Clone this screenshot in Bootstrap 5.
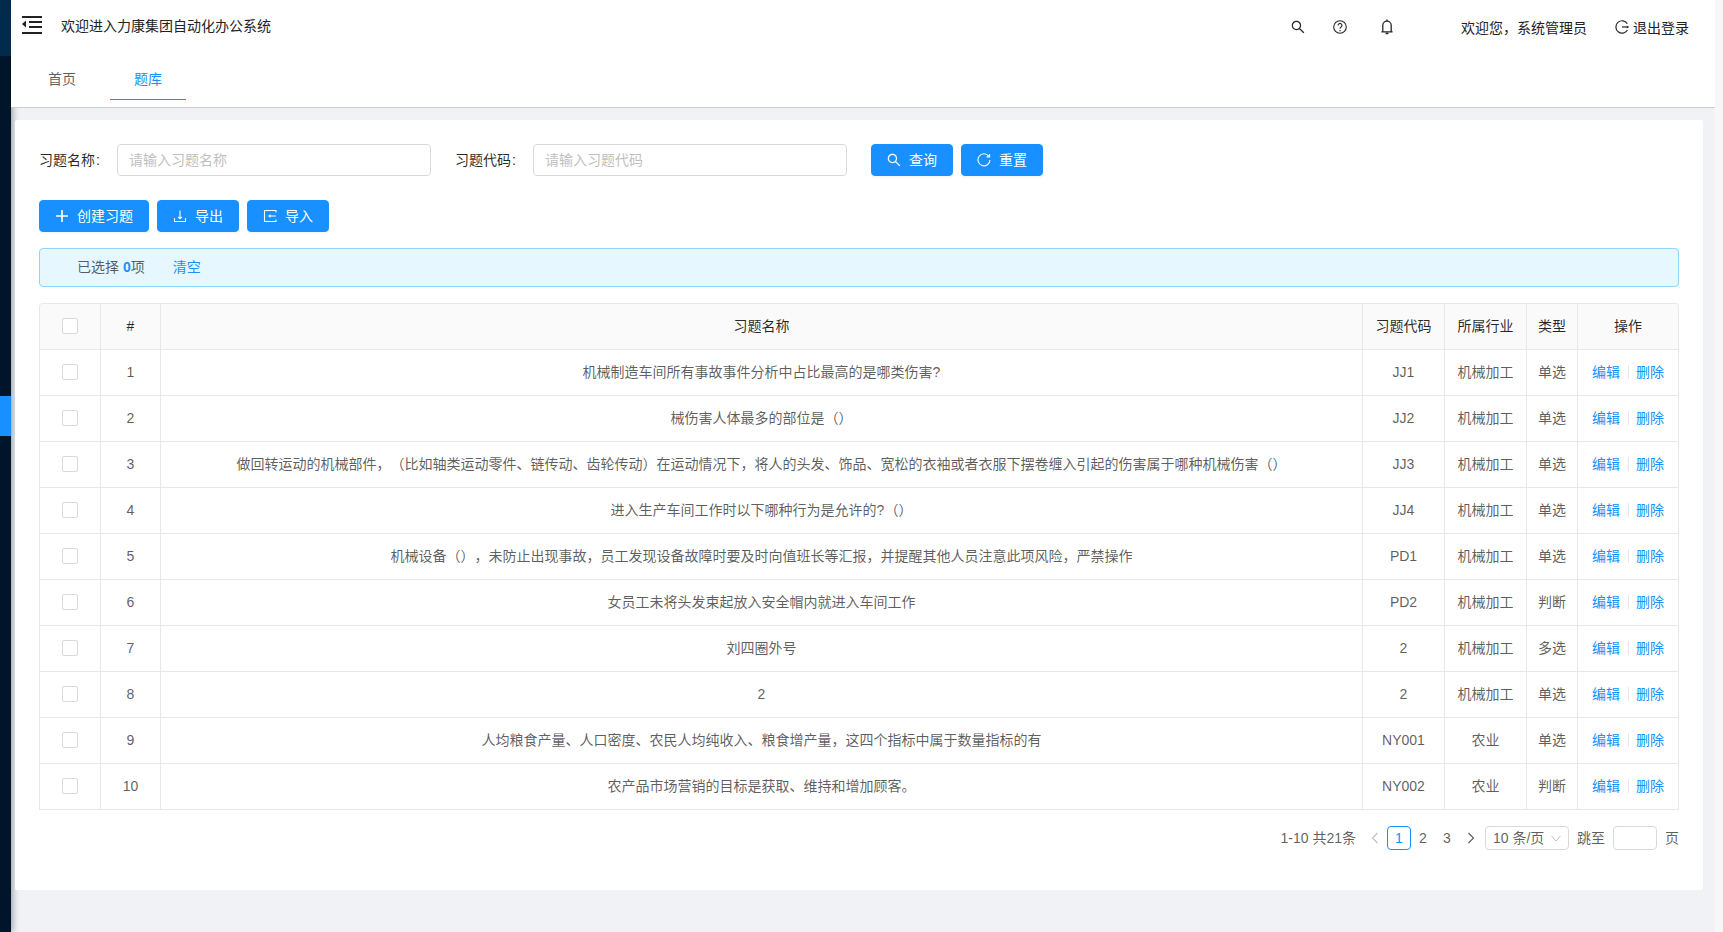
<!DOCTYPE html>
<html lang="zh-CN">
<head>
<meta charset="utf-8">
<title>题库</title>
<link href="https://cdn.jsdelivr.net/npm/bootstrap@5.3.0/dist/css/bootstrap.min.css" rel="stylesheet">
<style>
html,body{height:100%;overflow:hidden}
body{font-family:"Liberation Sans","Noto Sans CJK SC",sans-serif;font-size:14px;line-height:22px;color:rgba(0,0,0,.65);background:#f0f2f5;text-spacing-trim:space-all}
.shell{height:932px}
.side-rail{width:11px;background:#001529;box-shadow:2px 0 6px rgba(0,21,41,.35);z-index:1}
.rail-top{height:56px;background:#012a4c}
.rail-gap{height:340px}
.rail-active{height:40px;background:#1890ff}
.main-col{width:1704px;z-index:2;position:relative}
.scroll-strip{width:8px;background:#f7f7f7;z-index:3}
.top-head{height:56px;background:#fff;box-shadow:0 1px 4px rgba(0,21,41,.08);color:rgba(0,0,0,.85);position:relative;z-index:2;padding-left:11px}
.menu-ico{margin-right:19px;margin-top:-6px}
.head-title{margin-top:-4px;color:#222}
.head-right{color:#222}
.head-ico{fill:#262626}
.tab-bar{height:52px;background:#fff;border-bottom:1px solid #ccc;padding-left:13px;position:relative;z-index:2}
.tab-nav{gap:10px}
.tab-nav .nav-link{height:44px;width:76px;padding:12px 24px 0;color:rgba(0,0,0,.65);text-align:center}
.tab-nav .nav-link.active{color:#1890ff;border-bottom:1px solid #1890ff}
.page-body{padding:12px 12px 0 4px;position:relative;z-index:0;background:transparent}
.ant-panel{background:#fff;border-radius:2px;padding:24px 24px 40px;height:770px}
.query-row{height:32px;margin-bottom:24px}
.query-row.tool-row{margin-bottom:16px}
.q-label{width:78px;color:rgba(0,0,0,.85)}
.q-colon{margin-left:1px}
.q-input.form-control{width:314px;height:32px;padding:4px 11px;font-size:14px;border:1px solid #d9d9d9;border-radius:4px;margin-right:24px;color:rgba(0,0,0,.65)}
.q-input.form-control::placeholder{color:#bfbfbf}
.btn.ant-btn{--bs-btn-bg:#1890ff;--bs-btn-border-color:#1890ff;--bs-btn-hover-bg:#1890ff;--bs-btn-hover-border-color:#1890ff;height:32px;padding:0 15px;font-size:14px;line-height:30px;border-radius:4px;display:inline-flex;align-items:center;gap:8px;color:#fff;box-shadow:0 2px 0 rgba(0,0,0,.03)}
.ant-btn svg{flex:none}
.alert.sel-alert{height:39px;margin:0 0 16px;padding:7px 15px 7px 37px;background:#e6f7ff;border:1px solid #91d5ff;border-radius:4px;color:rgba(0,0,0,.65);line-height:23px}
.sel-num{color:#1890ff;font-weight:700;margin-left:4px}
.sel-clear{color:#1890ff;text-decoration:none;margin-left:28px}
.table-wrap{border:1px solid #e8e8e8;border-bottom:0;border-radius:4px 4px 0 0;overflow:hidden;height:507px;margin-bottom:16px}
.table.ant-table{table-layout:fixed;width:1638px;margin:0;border-collapse:separate;border-spacing:0;color:rgba(0,0,0,.65);--bs-table-bg:transparent}
.ant-table th,.ant-table td{height:46px;padding:0 0 2px;text-align:center;vertical-align:middle;font-weight:400;border:0;border-right:1px solid #e8e8e8;border-bottom:1px solid #e8e8e8;font-size:14px;white-space:nowrap;overflow:hidden}
.ant-table th{background:#fafafa;color:rgba(0,0,0,.85)}
.ant-table th:last-child,.ant-table td:last-child{border-right:0}
.c-check{width:61px}.c-num{width:60px}.c-code{width:82px}.c-ind{width:82px}.c-type{width:51px}.c-ops{width:100px}
.ant-check.form-check-input{width:16px;height:16px;border:1px solid #d9d9d9;border-radius:2px;display:block;margin:0 auto}
.op-link{color:#1890ff;text-decoration:none}
.op-split{display:inline-block;width:1px;height:14px;background:#e8e8e8;margin:0 7px 0 8px;vertical-align:-2px}
.pager-row{height:24px;color:rgba(0,0,0,.65)}
.pg-total{margin-right:7px}
.pg-arrow{width:24px;height:24px;text-align:center}
.pg-item{width:24px;height:24px;text-align:center;line-height:22px;border:1px solid transparent;border-radius:4px}
.pg-item.on{border-color:#1890ff;color:#1890ff}
.pg-sel{width:84px;height:24px;border:1px solid #d9d9d9;border-radius:4px;padding:0 7px;line-height:22px;margin:0 8px 0 2px}
.pg-jump{width:44px;height:24px;padding:0 7px;border:1px solid #d9d9d9;border-radius:4px;margin:0 8px}
</style>
</head>
<body>
<div class="shell d-flex">
  <aside class="side-rail flex-shrink-0 d-flex flex-column">
    <div class="rail-top"></div>
    <div class="rail-gap"></div>
    <div class="rail-active"></div>
  </aside>
  <div class="main-col flex-shrink-0 d-flex flex-column">
    <header class="top-head d-flex align-items-center">
      <svg class="menu-ico flex-shrink-0" width="20" height="18" viewBox="0 0 20 18"><g fill="#222"><rect x="0" y="0" width="20" height="2"/><rect x="7" y="5" width="13" height="2"/><rect x="7" y="10" width="13" height="2"/><rect x="0" y="16" width="20" height="2"/><path d="M0 8l4-3.5v7z"/></g></svg>
      <span class="head-title">欢迎进入力康集团自动化办公系统</span>
      <svg class="ms-auto flex-shrink-0 head-ico" style="margin-right:28px;margin-top:-2px" width="14" height="14" viewBox="64 64 896 896"><path d="M909.6 854.5L649.9 594.8C690.2 542.7 712 479 712 412c0-80.2-31.3-155.4-87.9-212.1-56.6-56.7-132-87.9-212.1-87.9s-155.5 31.3-212.1 87.9C143.2 256.5 112 331.8 112 412c0 80.1 31.3 155.5 87.9 212.1C256.5 680.8 331.8 712 412 712c67 0 130.6-21.8 182.7-62l259.7 259.6a8.2 8.2 0 0 0 11.6 0l43.6-43.5a8.2 8.2 0 0 0 0-11.6zM570.4 570.4C528 612.7 471.8 636 412 636s-116-23.3-158.4-65.6C211.3 528 188 471.8 188 412s23.3-116.1 65.6-158.4C296 211.3 352.2 188 412 188s116.1 23.2 158.4 65.6S636 352.2 636 412s-23.3 116.1-65.6 158.4z"/></svg>
      <svg class="flex-shrink-0" style="margin-right:34px;margin-top:-2px" width="14" height="14" viewBox="0 0 14 14" fill="none" stroke="#262626"><circle cx="7" cy="7" r="6.3" stroke-width="1.1"/><path d="M5 5.4a2 2 0 1 1 3.1 1.7c-.7.4-1.1.8-1.1 1.6" stroke-width="1.1"/><path d="M7 10v1.2" stroke-width="1.2"/></svg>
      <svg class="flex-shrink-0" style="margin-right:68px;margin-top:-2px" width="12" height="16" viewBox="0 0 12 16" fill="none" stroke="#262626" stroke-width="1.3"><path d="M1.8 12.6V6.4a4.2 4.2 0 0 1 8.4 0v6.2M.4 12.8h11.2"/><path d="M6 .4v1.6" /><path d="M4.6 14.4h2.8" stroke-width="1.6"/></svg>
      <span class="head-right" style="margin-right:28px">欢迎您，系统管理员</span>
      <svg class="flex-shrink-0" style="margin-right:4px;margin-top:-2px" width="14" height="14" viewBox="0 0 14 14" fill="none" stroke="#262626" stroke-width="1.2"><path d="M12.3 3.6A6.2 6.2 0 1 0 12.5 10"/><path d="M7 7h6.5"/><path d="M13.8 7l-2-1.4v2.8z" fill="#262626" stroke="none"/></svg>
      <span class="head-right" style="margin-right:26px">退出登录</span>
    </header>
    <div class="tab-bar flex-shrink-0">
      <ul class="nav tab-nav">
        <li class="nav-item"><a class="nav-link" href="#">首页</a></li>
        <li class="nav-item"><a class="nav-link active" href="#">题库</a></li>
      </ul>
    </div>
    <main class="page-body flex-grow-1">
      <div class="ant-panel">
        <div class="query-row d-flex align-items-center">
          <label class="q-label flex-shrink-0">习题名称<span class="q-colon">:</span></label>
          <input class="form-control q-input flex-shrink-0" placeholder="请输入习题名称">
          <label class="q-label flex-shrink-0">习题代码<span class="q-colon">:</span></label>
          <input class="form-control q-input flex-shrink-0" placeholder="请输入习题代码">
          <button class="btn ant-btn me-2" type="button"><svg width="14" height="14" viewBox="64 64 896 896" fill="#fff"><path d="M909.6 854.5L649.9 594.8C690.2 542.7 712 479 712 412c0-80.2-31.3-155.4-87.9-212.1-56.6-56.7-132-87.9-212.1-87.9s-155.5 31.3-212.1 87.9C143.2 256.5 112 331.8 112 412c0 80.1 31.3 155.5 87.9 212.1C256.5 680.8 331.8 712 412 712c67 0 130.6-21.8 182.7-62l259.7 259.6a8.2 8.2 0 0 0 11.6 0l43.6-43.5a8.2 8.2 0 0 0 0-11.6zM570.4 570.4C528 612.7 471.8 636 412 636s-116-23.3-158.4-65.6C211.3 528 188 471.8 188 412s23.3-116.1 65.6-158.4C296 211.3 352.2 188 412 188s116.1 23.2 158.4 65.6S636 352.2 636 412s-23.3 116.1-65.6 158.4z"/></svg>查询</button>
          <button class="btn ant-btn" type="button"><svg width="14" height="14" viewBox="0 0 14 14" fill="none" stroke="#fff" stroke-width="1.1"><path d="M11.8 3.2A6 6 0 1 0 13 7"/><path d="M12.6 .9v3H9.6" stroke-linejoin="round"/></svg>重置</button>
        </div>
        <div class="query-row tool-row d-flex align-items-center gap-2">
          <button class="btn ant-btn" type="button"><svg width="14" height="14" viewBox="0 0 14 14" fill="none" stroke="#fff" stroke-width="1.6"><path d="M7 1v12M1 7h12"/></svg>创建习题</button>
          <button class="btn ant-btn" type="button"><svg width="14" height="14" viewBox="0 0 14 14" fill="none" stroke="#fff" stroke-width="1.1"><path d="M1.5 9v3.5h11V9M7 1.5V9.5M5 7.8l2 2 2-2"/></svg>导出</button>
          <button class="btn ant-btn" type="button"><svg width="14" height="14" viewBox="0 0 14 14" fill="none" stroke="#fff" stroke-width="1.1"><path d="M13 3.5V1.5H1.5v11H13v-2M13 7H6.5"/><path d="M5 7l2.5-1.8v3.6z" fill="#fff" stroke="none"/></svg>导入</button>
        </div>
        <div class="alert sel-alert" role="alert">已选择<span class="sel-num">0</span>项<a class="sel-clear" href="#">清空</a></div>
        <div class="table-wrap">
          <table class="table ant-table">
            <colgroup><col class="c-check"><col class="c-num"><col><col class="c-code"><col class="c-ind"><col class="c-type"><col class="c-ops"></colgroup>
            <thead>
              <tr><th><input class="form-check-input ant-check" type="checkbox"></th><th>#</th><th>习题名称</th><th>习题代码</th><th>所属行业</th><th>类型</th><th>操作</th></tr>
            </thead>
            <tbody>
              <tr><td><input class="form-check-input ant-check" type="checkbox"></td><td>1</td><td>机械制造车间所有事故事件分析中占比最高的是哪类伤害?</td><td>JJ1</td><td>机械加工</td><td>单选</td><td><a class="op-link" href="#">编辑</a><span class="op-split"></span><a class="op-link" href="#">删除</a></td></tr>
              <tr><td><input class="form-check-input ant-check" type="checkbox"></td><td>2</td><td>械伤害人体最多的部位是（）</td><td>JJ2</td><td>机械加工</td><td>单选</td><td><a class="op-link" href="#">编辑</a><span class="op-split"></span><a class="op-link" href="#">删除</a></td></tr>
              <tr><td><input class="form-check-input ant-check" type="checkbox"></td><td>3</td><td>做回转运动的机械部件，（比如轴类运动零件、链传动、齿轮传动）在运动情况下，将人的头发、饰品、宽松的衣袖或者衣服下摆卷缠入引起的伤害属于哪种机械伤害（）</td><td>JJ3</td><td>机械加工</td><td>单选</td><td><a class="op-link" href="#">编辑</a><span class="op-split"></span><a class="op-link" href="#">删除</a></td></tr>
              <tr><td><input class="form-check-input ant-check" type="checkbox"></td><td>4</td><td>进入生产车间工作时以下哪种行为是允许的?（）</td><td>JJ4</td><td>机械加工</td><td>单选</td><td><a class="op-link" href="#">编辑</a><span class="op-split"></span><a class="op-link" href="#">删除</a></td></tr>
              <tr><td><input class="form-check-input ant-check" type="checkbox"></td><td>5</td><td>机械设备（），未防止出现事故，员工发现设备故障时要及时向值班长等汇报，并提醒其他人员注意此项风险，严禁操作</td><td>PD1</td><td>机械加工</td><td>单选</td><td><a class="op-link" href="#">编辑</a><span class="op-split"></span><a class="op-link" href="#">删除</a></td></tr>
              <tr><td><input class="form-check-input ant-check" type="checkbox"></td><td>6</td><td>女员工未将头发束起放入安全帽内就进入车间工作</td><td>PD2</td><td>机械加工</td><td>判断</td><td><a class="op-link" href="#">编辑</a><span class="op-split"></span><a class="op-link" href="#">删除</a></td></tr>
              <tr><td><input class="form-check-input ant-check" type="checkbox"></td><td>7</td><td>刘四圈外号</td><td>2</td><td>机械加工</td><td>多选</td><td><a class="op-link" href="#">编辑</a><span class="op-split"></span><a class="op-link" href="#">删除</a></td></tr>
              <tr><td><input class="form-check-input ant-check" type="checkbox"></td><td>8</td><td>2</td><td>2</td><td>机械加工</td><td>单选</td><td><a class="op-link" href="#">编辑</a><span class="op-split"></span><a class="op-link" href="#">删除</a></td></tr>
              <tr><td><input class="form-check-input ant-check" type="checkbox"></td><td>9</td><td>人均粮食产量、人口密度、农民人均纯收入、粮食增产量，这四个指标中属于数量指标的有</td><td>NY001</td><td>农业</td><td>单选</td><td><a class="op-link" href="#">编辑</a><span class="op-split"></span><a class="op-link" href="#">删除</a></td></tr>
              <tr><td><input class="form-check-input ant-check" type="checkbox"></td><td>10</td><td>农产品市场营销的目标是获取、维持和增加顾客。</td><td>NY002</td><td>农业</td><td>判断</td><td><a class="op-link" href="#">编辑</a><span class="op-split"></span><a class="op-link" href="#">删除</a></td></tr>
            </tbody>
          </table>
        </div>
        <div class="pager-row d-flex align-items-center justify-content-end">
          <span class="pg-total">1-10 共21条</span>
          <span class="pg-arrow d-flex align-items-center justify-content-center"><svg width="8" height="12" viewBox="0 0 8 12" fill="none" stroke="#bfbfbf" stroke-width="1.1"><path d="M6.5 1L1.5 6l5 5"/></svg></span>
          <span class="pg-item on">1</span>
          <span class="pg-item">2</span>
          <span class="pg-item">3</span>
          <span class="pg-arrow d-flex align-items-center justify-content-center"><svg width="8" height="12" viewBox="0 0 8 12" fill="none" stroke="#595959" stroke-width="1.1"><path d="M1.5 1l5 5-5 5"/></svg></span>
          <span class="pg-sel d-flex align-items-center justify-content-between">10 条/页<svg width="10" height="7" viewBox="0 0 10 7" fill="none" stroke="#bfbfbf" stroke-width="1"><path d="M.5 1l4.5 5 4.5-5"/></svg></span>
          <span>跳至</span>
          <input class="pg-jump" type="text" aria-label="跳至">
          <span>页</span>
        </div>
      </div>
    </main>
  </div>
  <div class="scroll-strip flex-shrink-0"></div>
</div>
<script src="https://cdn.jsdelivr.net/npm/bootstrap@5.3.0/dist/js/bootstrap.bundle.min.js"></script>
</body>
</html>
